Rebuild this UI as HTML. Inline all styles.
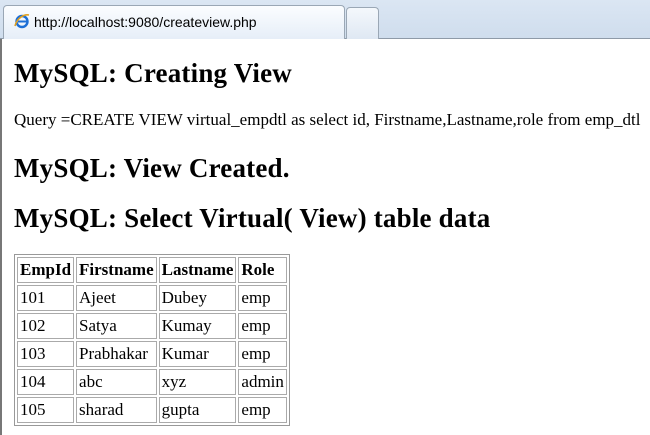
<!DOCTYPE html>
<html><head><style>
body{margin:0;width:650px;height:435px;overflow:hidden;background:#fff;font-family:"Liberation Serif",serif;position:relative}
.bar{position:absolute;left:0;top:0;width:650px;height:38px;background:linear-gradient(#dbe6f3,#cfdded);border-bottom:1px solid #8e9aa8}
.tab{position:absolute;left:3px;top:5px;width:340px;height:33px;background:linear-gradient(#fbfdff,#e6eef8);border:1px solid #9aa7b5;border-bottom:none;border-radius:4px 4px 0 0;font-family:"Liberation Sans",sans-serif;font-size:14px;color:#000;line-height:30px}
.tab span{position:absolute;left:30px;top:1px}
.tab2{position:absolute;left:346px;top:7px;width:31px;height:31px;background:linear-gradient(#f4f8fc,#dfe8f3);border:1px solid #9aa7b5;border-bottom:none;border-radius:4px 4px 0 0}
.page{position:absolute;left:0;top:39px;width:650px;height:396px;border-left:2px solid #777;box-sizing:border-box}
h2{position:absolute;left:12px;margin:0;font-size:27px;font-weight:bold;white-space:nowrap;letter-spacing:0.2px}
.q{position:absolute;left:12px;top:71px;font-size:17px;white-space:nowrap}
table{position:absolute;left:12px;top:215px;border:1px solid #999;border-collapse:separate;border-spacing:2px;font-size:17px}
td,th{border:1px solid #aaa;padding:0 2px;height:24px;text-align:left}
th{font-weight:bold}
</style></head><body>
<div class="bar"><div class="tab"><svg style="position:absolute;left:10px;top:7px" width="16" height="16" viewBox="0 0 16 16"><ellipse cx="8" cy="8.5" rx="5.5" ry="5.5" fill="none" stroke="#1d6fd6" stroke-width="2.4"/><rect x="4" y="7.5" width="9" height="2" fill="#1d6fd6"/><path d="M1 13 C3 5 10 1 15 2" stroke="#e0a020" stroke-width="1.6" fill="none"/></svg><span>http://localhost:9080/createview.php</span></div><div class="tab2"></div></div>
<div class="page">
<h2 style="top:19px">MySQL: Creating View</h2>
<div class="q">Query =CREATE VIEW virtual_empdtl as select id, Firstname,Lastname,role from emp_dtl</div>
<h2 style="top:114px">MySQL: View Created.</h2>
<h2 style="top:164px">MySQL: Select Virtual( View) table data</h2>
<table>
<tr><th>EmpId</th><th>Firstname</th><th>Lastname</th><th>Role</th></tr>
<tr><td>101</td><td>Ajeet</td><td>Dubey</td><td>emp</td></tr>
<tr><td>102</td><td>Satya</td><td>Kumay</td><td>emp</td></tr>
<tr><td>103</td><td>Prabhakar</td><td>Kumar</td><td>emp</td></tr>
<tr><td>104</td><td>abc</td><td>xyz</td><td>admin</td></tr>
<tr><td>105</td><td>sharad</td><td>gupta</td><td>emp</td></tr>
</table>
</div>
</body></html>
